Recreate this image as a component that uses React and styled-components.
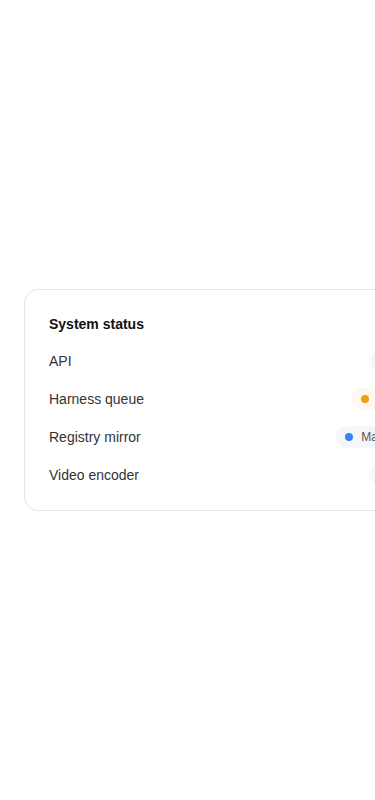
import styled, { createGlobalStyle } from "styled-components";

const GlobalStyle = createGlobalStyle`
  html, body {
    margin: 0;
    padding: 0;
    background: #ffffff;
    font-family: "Liberation Sans", Arial, sans-serif;
  }
`;

const services = [
  { name: "API", status: "Online", tone: "green" },
  { name: "Harness queue", status: "Degraded", tone: "orange" },
  { name: "Registry mirror", status: "Maintenance", tone: "blue" },
  { name: "Video encoder", status: "Online", tone: "green" },
];

const tones = {
  green: { dot: "#22c55e", bg: "#f5f6f7" },
  orange: { dot: "#f59e0b", bg: "#fdf8f1" },
  blue: { dot: "#3b82f6", bg: "#f4f6fa" },
};

export default function App() {
  return (
    <>
      <GlobalStyle />
      <Page>
        <Card>
          <Title>System status</Title>
          <List>
            {services.map((s) => (
              <Row key={s.name}>
                <Label>{s.name}</Label>
                <Pill tone={s.tone}>
                  <Dot tone={s.tone} />
                  {s.status}
                </Pill>
              </Row>
            ))}
          </List>
        </Card>
      </Page>
    </>
  );
}

const Page = styled.div`
  min-height: 100vh;
  display: flex;
  align-items: center;
  padding: 0 24px;
  overflow: hidden;
  box-sizing: border-box;
`;

const Card = styled.div`
  flex-shrink: 0;
  width: 441px;
  box-sizing: border-box;
  border: 1px solid #e4e4e7;
  border-radius: 14px;
  background: #fff;
  padding: 23px 24px 24px 24px;
`;

const Title = styled.h2`
  margin: 0;
  font-size: 14px;
  line-height: 22px;
  font-weight: 700;
  color: #111;
`;

const List = styled.div`
  display: flex;
  flex-direction: column;
  gap: 16px;
  margin-top: 15px;
`;

const Row = styled.div`
  display: flex;
  align-items: center;
  justify-content: space-between;
  height: 22px;
`;

const Label = styled.span`
  font-size: 14px;
  color: #333;
`;

const Pill = styled.span`
  display: inline-flex;
  align-items: center;
  gap: 8px;
  height: 22px;
  padding: 0 10px 0 9px;
  border-radius: 999px;
  background: ${(p) => tones[p.tone].bg};
  font-size: 12px;
  color: #555;
`;

const Dot = styled.span`
  width: 8px;
  height: 8px;
  border-radius: 50%;
  background: ${(p) => tones[p.tone].dot};
`;
